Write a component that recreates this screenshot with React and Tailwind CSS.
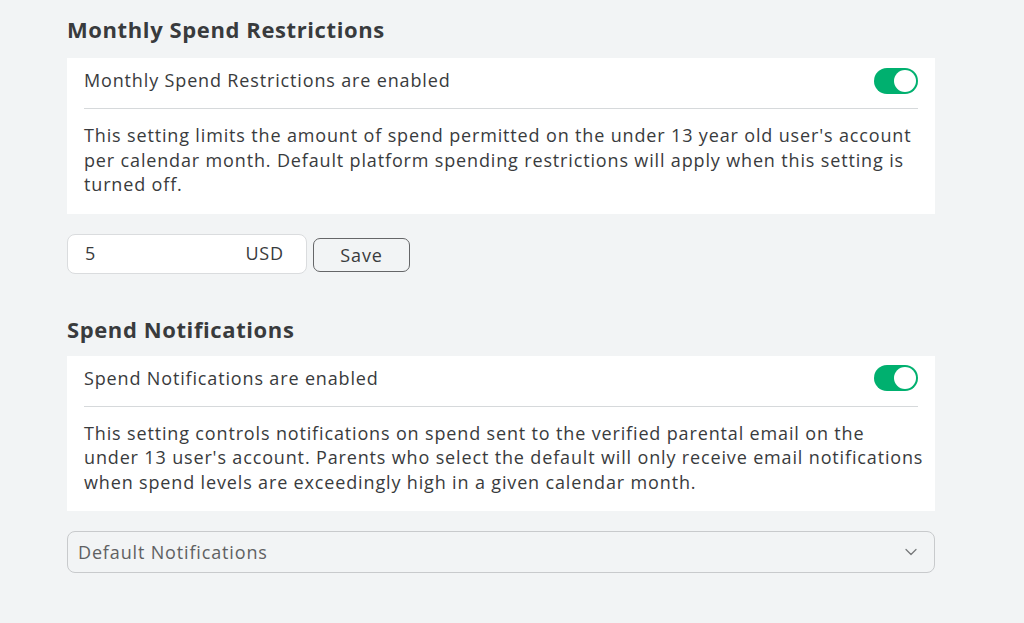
import { ChevronDown } from "lucide-react";

function Toggle() {
  return (
    <div className="w-[44px] h-[26px] rounded-full bg-[#00b06f] flex items-center justify-end pr-[2px]">
      <div className="w-[22px] h-[22px] rounded-full bg-white" />
    </div>
  );
}

function SettingCard({ label, children }) {
  return (
    <div className="bg-white pl-[17px]">
      <div className="flex items-center justify-between h-[51px] pb-[5px] mr-[17px] border-b border-[#d6d9db]">
        <span>{label}</span>
        <Toggle />
      </div>
      <p className="pt-[14px] pb-[17px] pr-[8px] leading-[24.5px]">{children}</p>
    </div>
  );
}

export default function App() {
  return (
    <div
      className="min-h-[623px] bg-[#f2f4f5] text-[#393b3d] text-[18px] tracking-[0.85px]"
      style={{ fontFamily: '"Open Sans", "Liberation Sans", sans-serif' }}
    >
      <div className="ml-[67px] w-[868px] pt-[13px]">
        <h2 className="text-[22px] font-bold h-[45px] leading-[32px] tracking-[0.6px]">Monthly Spend Restrictions</h2>
        <SettingCard label="Monthly Spend Restrictions are enabled">
          This setting limits the amount of spend permitted on the under 13 year old user's account
          <br />
          per calendar month. Default platform spending restrictions will apply when this setting is
          <br />
          turned off.
        </SettingCard>
        <div className="flex items-center gap-[6px] mt-[20px]">
          <div className="w-[240px] h-[40px] bg-white border border-[#dadcde] rounded-[8px] flex items-center justify-between pl-[17px] pr-[22px]">
            <span>5</span>
            <span>USD</span>
          </div>
          <button className="w-[97px] h-[34px] mt-[3px] border border-[#656668] rounded-[7px] text-[#393b3d]">
            Save
          </button>
        </div>
        <h2 className="text-[22px] font-bold mt-[39px] h-[43px] leading-[32px] tracking-[0.6px]">Spend Notifications</h2>
        <SettingCard label="Spend Notifications are enabled">
          This setting controls notifications on spend sent to the verified parental email on the
          <br />
          under 13 user's account. Parents who select the default will only receive email notifications
          <br />
          when spend levels are exceedingly high in a given calendar month.
        </SettingCard>
        <div className="mt-[20px] h-[42px] border border-[#c8cacc] rounded-[8px] flex items-center justify-between pl-[10px] pr-[13px] text-[#606162]">
          <span>Default Notifications</span>
          <ChevronDown size={20} strokeWidth={1.5} className="text-[#77797b]" />
        </div>
      </div>
    </div>
  );
}
